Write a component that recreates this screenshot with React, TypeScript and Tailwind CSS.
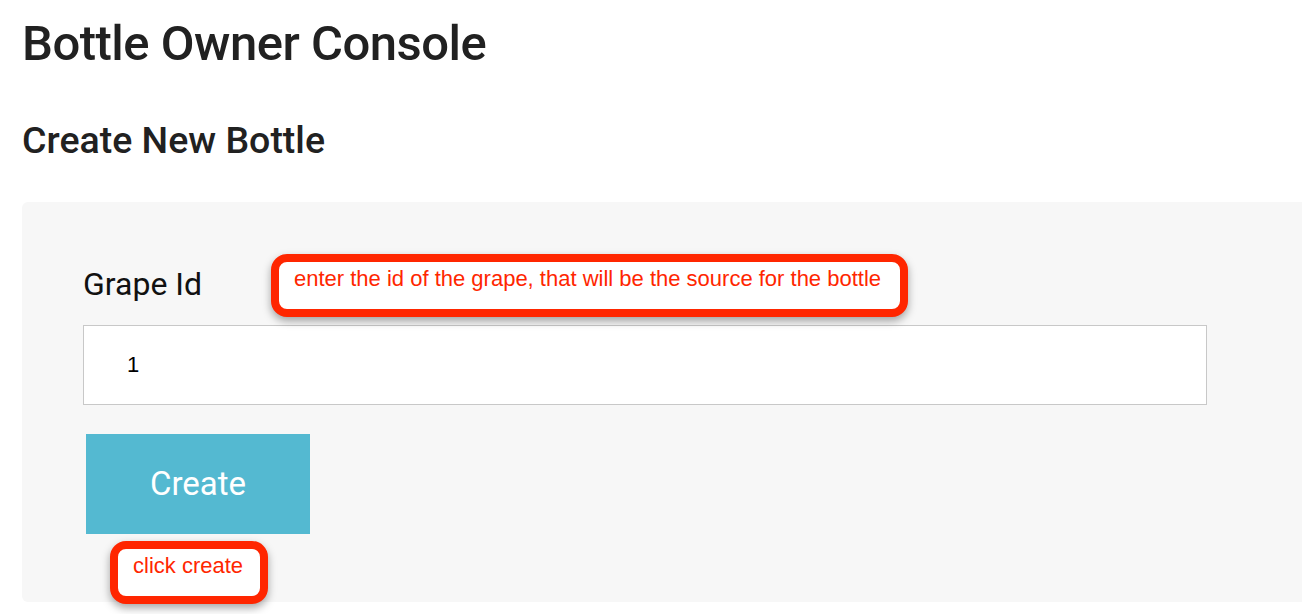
export default function App() {
  return (
    <div className="relative h-[614px] w-[1302px] overflow-hidden bg-white font-['Roboto',sans-serif] text-[#212121]">
      <h1 className="ml-[22px] pt-[19px] text-[49px] font-medium leading-none tracking-[-0.5px]">Bottle Owner Console</h1>
      <h2 className="ml-[22px] mt-[54px] text-[37.5px] font-medium leading-none">Create New Bottle</h2>

      <div className="ml-[22px] mt-[42px] w-[1300px] rounded-md bg-[#f7f7f7] pb-[68px] pl-[61px] pt-[66px]">
        <label className="block text-[32px] leading-none text-[#111]">Grape Id</label>
        <div className="mt-[25px] flex h-[80px] w-[1124px] items-center border border-[#c8c8c8] bg-white pl-[43px] font-['Liberation_Sans',sans-serif] text-[22px] text-black">
          1
        </div>
        <button className="ml-[3px] mt-[29px] h-[100px] w-[224px] bg-[#54b9d1] text-[33px] text-white">
          Create
        </button>
      </div>

      {/* annotations */}
      <div className="absolute left-[271px] top-[254px] h-[63px] w-[637px] rounded-[16px] border-[8px] border-[#ff2600] bg-white pl-[15px] pt-[4px] font-['Liberation_Sans',sans-serif] text-[22px] leading-[26px] text-[#ff2600] shadow-[0_4px_8px_rgba(0,0,0,0.35)]">
        enter the id of the grape, that will be the source for the bottle
      </div>
      <div className="absolute left-[110px] top-[541px] h-[63px] w-[158px] rounded-[16px] border-[8px] border-[#ff2600] bg-white pl-[15px] pt-[4px] font-['Liberation_Sans',sans-serif] text-[22px] leading-[26px] text-[#ff2600] shadow-[0_4px_8px_rgba(0,0,0,0.35)]">
        click create
      </div>
    </div>
  );
}
